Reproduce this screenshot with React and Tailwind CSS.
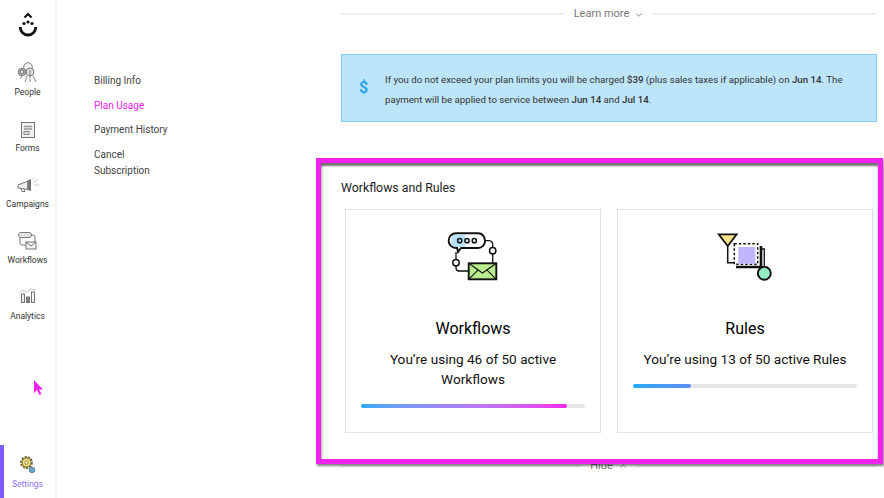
import { ChevronDown, ChevronUp } from "lucide-react";

const PeopleIcon = () => (
  <svg width="21" height="21" viewBox="0 0 21 21" fill="none" stroke="#666" strokeWidth=".8">
    <circle cx="11" cy="5" r="4.300" fill="#f4f4f4" />
    <circle cx="5" cy="10" r="3.800" fill="#aaa" />
    <circle cx="13" cy="10" r="4" fill="#ddd" />
    <circle cx="5" cy="10" r="1.600" fill="#fff" />
    <path d="M13 8v6M3 17l2-3M8 20l2-6M16 14l3 6M13 14v6" />
  </svg>
);

const FormsIcon = () => (
  <svg width="14" height="16" viewBox="0 0 14 16" fill="none">
    <rect x=".5" y=".5" width="13" height="15" fill="#f1f1f1" stroke="#777" />
    <path d="M3 4.500h8M3 7h8" stroke="#999" strokeWidth="1.300" />
    <rect x="3" y="9.500" width="5" height="3" fill="#ddd" stroke="#777" strokeWidth=".8" />
  </svg>
);

const CampaignsIcon = () => (
  <svg width="22" height="15" viewBox="0 0 22 15" fill="none" stroke="#666" strokeWidth=".9">
    <path d="M1 8l10-4v8.500L1 11z" fill="#eee" />
    <path d="M11 4l2.500-1.500v11L11 12.500z" fill="#777" />
    <path d="M4 11.500l1 3h3l-1-2.500" />
    <path d="M16 6l5-3.500M17 8h5M15.500 2.500L17 .5" stroke="#c4c4c4" />
  </svg>
);

const WorkflowsIcon = () => (
  <svg width="19" height="18" viewBox="0 0 19 18" fill="none" stroke="#666" strokeWidth=".9">
    <rect x=".5" y=".5" width="13" height="5" rx="2.500" fill="#eee" />
    <path d="M3.500 3h.8M6.500 3h.8M9.500 3h.8" />
    <path d="M2 5.500V11a2 2 0 0 0 2 2h4M13.500 3H15a2 2 0 0 1 2 2v5" />
    <rect x="8" y="10" width="10" height="7" fill="#f4f4f4" />
    <path d="M8 10l5 4 5-4" />
  </svg>
);

const AnalyticsIcon = () => (
  <svg width="18" height="15" viewBox="0 0 18 15" fill="none" stroke="#666" strokeWidth=".9">
    <path d="M.5 5L4 2l3.500 2.500L12 1l5 1.500" stroke="#bbb" />
    <rect x="2.500" y="6" width="3" height="8.500" fill="#eee" />
    <rect x="7.500" y="9" width="3" height="5.500" fill="#888" />
    <rect x="12.500" y="4" width="3" height="10.500" fill="#f4f4f4" />
  </svg>
);

const SettingsIcon = () => (
  <svg width="16" height="18" viewBox="0 0 16 18" fill="none">
    <circle cx="6.500" cy="6.500" r="5.300" fill="#f5e27a" stroke="#6b6238" strokeWidth="2.200" strokeDasharray="2.200 1" />
    <circle cx="6.500" cy="6.500" r="4.300" fill="#f5e27a" stroke="#7a7040" strokeWidth=".8" />
    <circle cx="6.500" cy="6.500" r="1.800" fill="#fff6c4" stroke="#7a7040" strokeWidth=".8" />
    <circle cx="12" cy="14" r="2.800" fill="#63a6cf" stroke="#56708a" strokeWidth=".8" />
  </svg>
);

const WorkflowsArt = () => (
  <svg width="52" height="50" viewBox="0 0 52 50" fill="none" stroke="#111" strokeWidth="1.500">
    <path d="M5 4h13v12H9a4 4 0 0 1-5-4z" fill="#b6e2fa" stroke="none" />
    <path d="M38 9.700a7 7 0 0 1-7 7.300H14l-3 4-.8-4H9a7 7 0 0 1 0-14.700h22a7 7 0 0 1 7 7.400z" strokeWidth="1.900" />
    <circle cx="12.700" cy="9.700" r="2.100" fill="#b6e2fa" />
    <circle cx="20" cy="9.700" r="2.100" fill="#d8effb" />
    <circle cx="27.300" cy="9.700" r="2.100" fill="#fff" />
    <path d="M38 9.700h4a4 4 0 0 1 3.700 4v2.800M45.700 23v9.300M9 21v7.500M9 35v2a3 3 0 0 0 3 3h9.700" strokeWidth="1.300" />
    <circle cx="45.700" cy="19.700" r="3.200" fill="#fff" />
    <circle cx="9" cy="31.700" r="3.200" fill="#fff" />
    <rect x="21.700" y="32.300" width="27.600" height="16" fill="#b9ee8f" strokeWidth="1.900" />
    <path d="M21.700 32.300L35.500 42l13.800-9.700M21.700 48.300l9.500-9.500M49.300 48.300l-9.500-9.500" strokeWidth="1.100" />
  </svg>
);

const RulesArt = () => (
  <svg width="56" height="50" viewBox="1 0 56 50" fill="none" stroke="#111" strokeWidth="1.500">
    <path d="M11.700 15v16.700h6.600" />
    <path d="M2.700 3.300h18L11.700 15z" fill="#fbe08a" strokeWidth="1.700" />
    <path d="M20 36h25V15" strokeWidth="2.600" />
    <path d="M45 18h3.300v18" strokeWidth="1.300" />
    <rect x="18.300" y="12.700" width="23.400" height="20.600" fill="#fff" strokeDasharray="2.500 2" />
    <rect x="22.300" y="16" width="17" height="16.700" fill="#c2b5fb" stroke="none" />
    <circle cx="48.300" cy="42.300" r="6.500" fill="#93eec4" strokeWidth="1.900" />
  </svg>
);

const UsageCard = ({ art, title, usage, percent, barClass }) => (
  <div className="flex w-[256px] flex-col items-center border border-[#e2e2e2] px-[15px]">
    <div className="flex h-[107px] items-start pt-[21px]">{art}</div>
    <div className="text-[16px] leading-[24px] text-black">{title}</div>
    <div className="mt-[8px] text-center text-[13.600px] leading-[20px] text-[#111]">{usage}</div>
    <div className="mt-[15px] h-[4px] w-full rounded-full bg-[#e6e6e6]">
      <div className={"h-full rounded-full " + barClass} style={{ width: percent + "%" }} />
    </div>
  </div>
);

const NavItem = ({ icon, label, boxClass }) => (
  <div className="flex h-[56px] flex-col items-center">
    <div className={"flex h-[22px] justify-center " + boxClass}>{icon}</div>
    <div className="mt-[4px] text-[8.500px] leading-[12px] text-[#333]">{label}</div>
  </div>
);

export default function App() {
  return (
    <div className="relative flex h-[498px] w-[884px] overflow-hidden bg-white font-['Roboto',sans-serif]">
      <aside className="flex w-[57px] shrink-0 flex-col border-r-2 border-[#f3f3f3]">
        <div className="flex h-[60px] justify-center pt-[12px]">
          <svg width="20" height="25" viewBox="0 0 20 25" fill="none" stroke="#111">
            <path d="M6.500 5.500L10 2l3.500 3.500" strokeWidth="2.200" />
            <circle cx="6" cy="11.500" r="1.600" fill="#111" stroke="none" />
            <circle cx="10" cy="10" r="1.600" fill="#111" stroke="none" />
            <circle cx="14" cy="11.500" r="1.600" fill="#111" stroke="none" />
            <path d="M2.300 15a7.700 8 0 0 0 15.400 0" strokeWidth="2.800" />
          </svg>
        </div>
        <NavItem icon={<PeopleIcon />} label="People" boxClass="items-start pt-[2px]" />
        <NavItem icon={<FormsIcon />} label="Forms" boxClass="items-end" />
        <NavItem icon={<CampaignsIcon />} label="Campaigns" boxClass="items-end pb-[2px]" />
        <NavItem icon={<WorkflowsIcon />} label="Workflows" boxClass="items-end" />
        <NavItem icon={<AnalyticsIcon />} label="Analytics" boxClass="items-end pb-[3px]" />
        <div className="mt-auto flex h-[53px] flex-col items-center border-l-4 border-[#7c5cfc] pr-[4px] pt-[11px]">
          <SettingsIcon />
          <div className="mt-[4px] text-[8.500px] leading-[12px] text-[#8b73f8]">Settings</div>
        </div>
      </aside>

      <nav className="w-[284px] shrink-0 pl-[37px] pt-[73px] text-[10px] text-[#444]">
        <div className="leading-[16px]">Billing Info</div>
        <div className="mt-[8.500px] leading-[16px] text-[#ee22ee]">Plan Usage</div>
        <div className="mt-[8.500px] leading-[16px]">Payment History</div>
        <div className="mt-[8.500px] w-[70px] leading-[16px]">Cancel Subscription</div>
      </nav>

      <main className="w-[536px] shrink-0 pt-[6px]">
        <div className="flex h-[16px] items-center gap-[9px]">
          <div className="h-[2px] flex-1 bg-[#efefef]" />
          <div className="flex items-center gap-[5px] pt-[1px] text-[11px] text-[#777]">
            Learn more <ChevronDown size={10} strokeWidth={2} />
          </div>
          <div className="h-[2px] flex-1 bg-[#efefef]" />
        </div>

        <div className="mt-[32px] flex h-[68px] items-center border border-[#7fcdf8] bg-[#bde5fa]">
          <div className="w-[43px] pl-[17px] text-[16px] font-bold text-[#2aa6ea]">$</div>
          <p className="flex-1 pr-[20px] pt-[3px] text-[9.700px] leading-[20px] text-[#333]">
            If you do not exceed your plan limits you will be charged <span className="font-medium">$39</span> (plus sales taxes if applicable) on <span className="font-medium">Jun 14</span>. The payment will be applied to service between <span className="font-medium">Jun 14</span> and <span className="font-medium">Jul 14</span>.
          </p>
        </div>

        <section className="relative z-10 -ml-[25px] mt-[36px] h-[306px] w-[567px] border-[5px] border-[#f022ee] bg-white pl-[20px] pt-[17px] shadow-[1px_2px_2px_rgba(0,0,0,0.5),inset_0_3px_2px_rgba(0,0,0,0.55),inset_2px_0_1px_rgba(0,0,0,0.12)]">
          <div className="text-[12.300px] leading-[16px] text-[#222]">Workflows and Rules</div>
          <div className="mt-[13px] flex h-[224px] gap-[16px] pl-[4px]">
            <UsageCard
              art={<WorkflowsArt />}
              title="Workflows"
              usage="You’re using 46 of 50 active Workflows"
              percent={92}
              barClass="bg-gradient-to-r from-[#22aaf5] to-[#f022ee]"
            />
            <UsageCard
              art={<RulesArt />}
              title="Rules"
              usage="You’re using 13 of 50 active Rules"
              percent={26}
              barClass="bg-gradient-to-r from-[#22aaf5] to-[#5b8cf5]"
            />
          </div>
        </section>

        <div className="-mt-[3px] flex h-[10px] items-center gap-[9px] text-[11px] text-[#777]">
          <div className="h-[2px] flex-1 bg-[#efefef]" />
          <div className="flex items-center gap-[5px]">
            Hide <ChevronUp size={10} strokeWidth={2} />
          </div>
          <div className="h-[2px] flex-1 bg-[#efefef]" />
        </div>
      </main>

      <svg className="absolute left-[33px] top-[379px] z-20" width="12" height="17" viewBox="0 0 12 17">
        <path d="M1 1l0 13 3-3 2.500 5 2-1-2.500-4.500H10z" fill="#f022ee" />
      </svg>
    </div>
  );
}
